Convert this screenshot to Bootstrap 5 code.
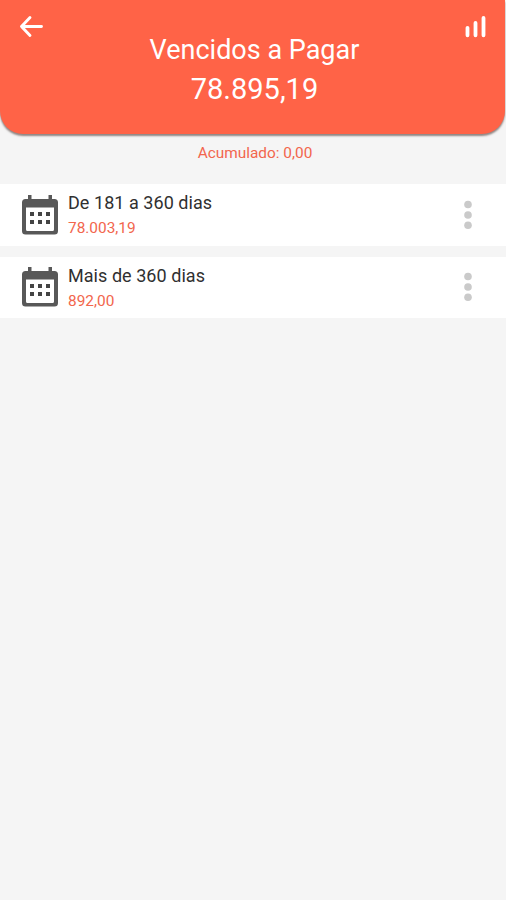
<!DOCTYPE html>
<html lang="pt-BR">
<head>
<meta charset="utf-8">
<meta name="viewport" content="width=device-width, initial-scale=1">
<title>Vencidos a Pagar</title>
<link href="https://cdn.jsdelivr.net/npm/bootstrap@5.3.0/dist/css/bootstrap.min.css" rel="stylesheet">
<style>
body { font-family: Roboto, "Liberation Sans", sans-serif; background: #f5f5f5; min-height: 100vh; overflow: hidden; }
.app-header { height: 134px; background: #ff6347; border-radius: 0 0 23px 23px; box-shadow: 0 2px 2px rgba(60,40,35,.55); padding: 14px 19px 0 19px; margin-right: 1px; }
.icon-btn { line-height: 0; }
.title { font-size: 27px; line-height: 32px; margin-top: -6px; padding-left: 4px; letter-spacing: 0; }
.total { font-size: 29px; line-height: 32px; margin-top: 7px; padding-left: 4px; }
.accent { color: #f2664d; }
.accumulated { font-size: 15.400px; line-height: 20px; padding: 9px 0 0 4px; height: 50px; }
.entries { gap: 11px; }
.entry { height: 61.5px; background: #fff; padding: 0 32px 0 21px; }
.entry-text { margin-left: 9px; }
.entry-name { font-size: 18px; line-height: 22px; color: #303030; letter-spacing: .05px; }
.entry-value { font-size: 15.400px; line-height: 20px; margin-top: 4px; }
.entry-text { padding-top: 1px; }
</style>
</head>
<body>
<svg class="d-none">
  <symbol id="calendar" viewBox="0 0 38 42">
    <path fill="#585858" fill-rule="evenodd" d="M7 1h3.500v4h17V1H31v4h2.500q3.500 0 3.500 3.500V37q0 3.500-3.500 3.500h-29Q1 40.500 1 37V8.500Q1 5 4.500 5H7zM5 13.500v22q0 1.500 1.500 1.500h25q1.500 0 1.500-1.500v-22z"/>
    <path fill="#444" d="M9 18h4v4H9zM17 18h4v4h-4zM25 18h4v4h-4zM9 26h4v4H9zM17 26h4v4h-4zM25 26h4v4h-4z"/>
  </symbol>
  <symbol id="more" viewBox="0 0 12 30">
    <g fill="#cacaca"><circle cx="6" cy="4.500" r="3.800"/><circle cx="6" cy="15" r="3.800"/><circle cx="6" cy="25.300" r="3.800"/></g>
  </symbol>
</svg>
<header class="app-header text-white text-center">
  <div class="d-flex justify-content-between">
    <div class="icon-btn"><svg width="26" height="26" fill="none" stroke="#fff" stroke-width="2.900" stroke-linecap="round" stroke-linejoin="round"><path d="M11 3.500L2.500 12.500l8.500 9M2.500 12.500H22.500"/></svg></div>
    <div class="icon-btn"><svg width="22" height="26" stroke="#fff" stroke-width="3.800" stroke-linecap="round"><path d="M3.500 13.800v7.500M11.500 9v12.300M19.500 4v17.300"/></svg></div>
  </div>
  <h1 class="title fw-normal mb-0"><span>Vencidos a Pagar</span></h1>
  <div class="total"><span>78.895,19</span></div>
</header>
<main>
  <div class="accumulated accent text-center"><span>Acumulado: 0,00</span></div>
  <div class="entries d-flex flex-column">
    <div class="entry d-flex align-items-center">
      <svg class="flex-shrink-0" width="38" height="42"><use href="#calendar"/></svg>
      <div class="entry-text flex-grow-1"><div class="entry-name"><span>De 181 a 360 dias</span></div><div class="entry-value accent"><span>78.003,19</span></div></div>
      <svg width="12" height="30"><use href="#more"/></svg>
    </div>
    <div class="entry d-flex align-items-center">
      <svg class="flex-shrink-0" width="38" height="42"><use href="#calendar"/></svg>
      <div class="entry-text flex-grow-1"><div class="entry-name"><span>Mais de 360 dias</span></div><div class="entry-value accent"><span>892,00</span></div></div>
      <svg width="12" height="30"><use href="#more"/></svg>
    </div>
  </div>
</main>
<script src="https://cdn.jsdelivr.net/npm/bootstrap@5.3.0/dist/js/bootstrap.bundle.min.js"></script>
</body>
</html>
